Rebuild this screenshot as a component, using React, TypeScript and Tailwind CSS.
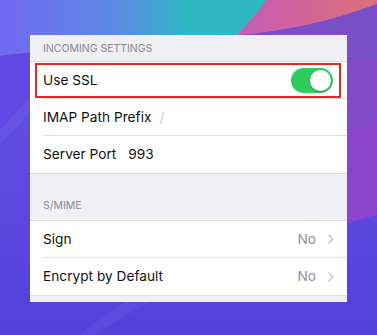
function Wallpaper() {
  return (
    <svg
      className="absolute inset-0"
      width="377"
      height="335"
      viewBox="0 0 377 335"
    >
      <defs>
        <linearGradient id="top" x1="0" y1="0" x2="1" y2="0">
          <stop offset="0" stopColor="#7068f2" />
          <stop offset="0.45" stopColor="#5c8be2" />
          <stop offset="0.7" stopColor="#2db8c4" />
        </linearGradient>
        <linearGradient id="pink" x1="0" y1="0" x2="1" y2="0">
          <stop offset="0" stopColor="#c65ab8" />
          <stop offset="1" stopColor="#dc7078" />
        </linearGradient>
        <linearGradient id="base" x1="0" y1="0" x2="0" y2="1">
          <stop offset="0" stopColor="#6852e6" />
          <stop offset="1" stopColor="#5640da" />
        </linearGradient>
      </defs>
      <rect width="377" height="335" fill="url(#base)" />
      <path d="M0 0 H267 C258 14 248 26 232 40 C150 48 60 52 0 56 Z" fill="url(#top)" />
      <path d="M267 0 H377 V4 C330 22 290 30 236 36 C248 24 258 12 267 0 Z" fill="url(#pink)" />
      <path d="M377 4 C330 22 290 30 236 36 L220 60 L377 60 Z" fill="#7a4ec6" />
      <path d="M377 60 V125 C360 130 350 133 340 136 L340 60 Z" fill="#834ac8" />
      <path d="M340 136 C352 132 364 128 377 124 V215 C365 218 352 222 340 225 Z" fill="#8c44cc" />
      <path d="M0 56 C10 54 25 53 40 52 L40 90 C25 105 10 120 0 130 Z" fill="#6248e2" />
      <path d="M0 130 C15 115 30 95 40 85 L40 100 C28 115 15 130 0 145 Z" fill="#6a58e6" opacity="0.6" />
      <path d="M80 335 C120 300 180 270 260 240 L260 250 C190 280 130 310 95 335 Z" fill="#6a58e6" opacity="0.35" />
    </svg>
  );
}

function Chevron() {
  return (
    <svg className="ml-[12px]" width="6" height="10" viewBox="0 0 6 10">
      <path
        d="M1 1 L5 5 L1 9"
        fill="none"
        stroke="#c4c4c9"
        strokeWidth="1.5"
        strokeLinecap="round"
        strokeLinejoin="round"
      />
    </svg>
  );
}

function Row({
  children,
  last,
}: {
  children: React.ReactNode;
  last?: boolean;
}) {
  return (
    <div className="relative flex h-[37px] items-center bg-white pl-[13px]">
      <div
        className={
          "flex h-full flex-1 items-center pr-[13px] " +
          (last ? "" : "border-b border-[#dcdce0]")
        }
      >
        {children}
      </div>
    </div>
  );
}

export default function App() {
  return (
    <div
      className="relative h-[335px] w-[377px] overflow-hidden"
      style={{ fontFamily: "Inter, 'Liberation Sans', sans-serif" }}
    >
      <Wallpaper />
      <div className="relative ml-[30px] mt-[35px] w-[317px] bg-[#efeff4] text-[13.7px] text-[#111]">
        <div className="flex h-[26px] items-end pb-[4px] pl-[13px] text-[10.5px] text-[#8a8a8f]">
          INCOMING SETTINGS
        </div>

        <div className="border-t border-[#dcdce0]">
          <div className="relative">
            <Row>
              <span className="flex-1">Use SSL</span>
              <div className="mr-[1px] flex h-[25px] w-[42px] items-center justify-end rounded-full bg-[#2fcb5b] p-[2px]">
                <div className="h-[21px] w-[21px] rounded-full bg-white shadow-[0_1px_2px_rgba(0,0,0,0.25)]" />
              </div>
            </Row>
            <div className="pointer-events-none absolute bottom-[1px] left-[5px] right-[6px] top-[1px] border-[2.5px] border-[#e8261c]" />
          </div>
          <Row>
            <span>IMAP Path Prefix</span>
            <span className="ml-[8px] text-[#d0d0d4]">/</span>
          </Row>
          <Row last>
            <span>Server Port</span>
            <span className="ml-[12px]">993</span>
          </Row>
        </div>

        <div className="flex h-[47px] items-end border-t border-[#dcdce0] pb-[6px] pl-[13px] text-[10.5px] text-[#8a8a8f]">
          S/MIME
        </div>

        <div className="border-y border-[#dcdce0]">
          <Row>
            <span className="flex-1">Sign</span>
            <span className="text-[#8e8e93]">No</span>
            <Chevron />
          </Row>
          <Row last>
            <span className="flex-1">Encrypt by Default</span>
            <span className="text-[#8e8e93]">No</span>
            <Chevron />
          </Row>
        </div>
        <div className="h-[6px]" />
      </div>
    </div>
  );
}
